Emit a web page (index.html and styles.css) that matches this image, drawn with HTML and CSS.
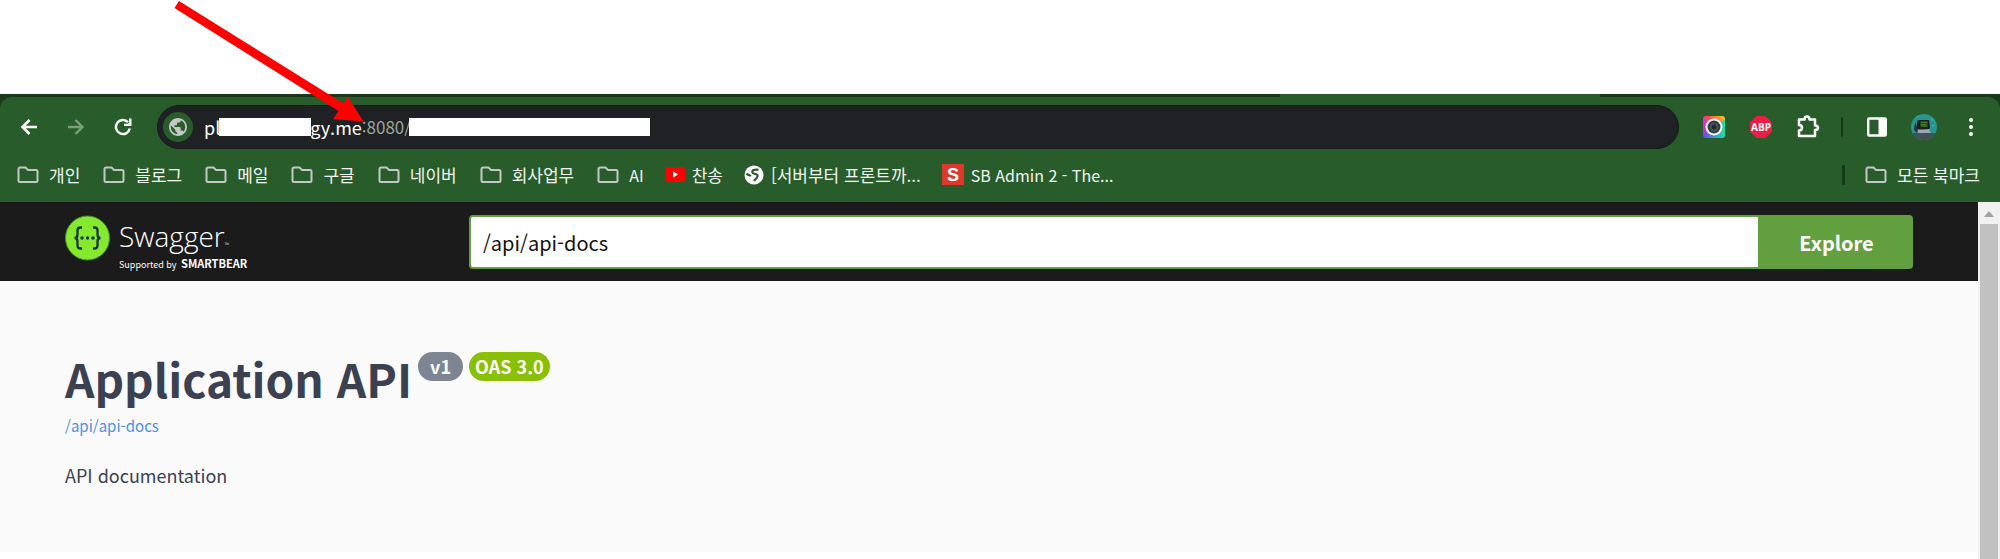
FILE: index.html
```html
<!DOCTYPE html>
<html lang="ko">
<head>
<meta charset="utf-8">
<title>Swagger UI</title>
<link rel="stylesheet" href="styles.css">
</head>
<body>
<svg width="0" height="0" class="defs" aria-hidden="true">
  <defs>
    <symbol id="folder" viewBox="0 0 22 18"><path d="M3 1.500h5.500l2.500 2.500h8a1.500 1.500 0 0 1 1.500 1.500v9a1.500 1.500 0 0 1-1.500 1.500H3a1.500 1.500 0 0 1-1.500-1.500v-11.500a1.500 1.500 0 0 1 1.500-1.500z" fill="none" stroke="#c4c7c5" stroke-width="2"/></symbol>
    <symbol id="globe" viewBox="2 2 20 20"><path d="M12 2C6.480 2 2 6.480 2 12s4.480 10 10 10 10-4.480 10-10S17.520 2 12 2zm-1 17.930c-3.950-.49-7-3.850-7-7.930 0-.62.080-1.210.210-1.790L9 15v1c0 1.100.9 2 2 2v1.930zm6.900-2.540c-.26-.81-1-1.390-1.900-1.390h-1v-3c0-.55-.45-1-1-1H8v-2h2c.55 0 1-.45 1-1V7h2c1.100 0 2-.9 2-2v-.41c2.930 1.190 5 4.060 5 7.410 0 2.080-.8 3.970-2.100 5.390z" fill="currentColor"/></symbol>
  </defs>
</svg>
<div class="screen">
  <svg class="arrow" width="200" height="130" viewBox="170 0 200 130" aria-hidden="true"><path d="M179 1L343.500 103.500 347.600 96.500 363.500 121.500 333 119 338.500 111 174.500 8z" fill="#f00"/></svg>
  <div class="tabstrip"><div class="active-tab"></div></div>
  <header class="browser">
    <nav class="toolbar">
      <button class="tool" aria-label="뒤로"><svg width="18" height="18" viewBox="0 0 18 18"><path d="M17 9H3M9.500 2L2.500 9l7 7" fill="none" stroke="#fff" stroke-width="2.600"/></svg></button>
      <button class="tool" aria-label="앞으로"><svg width="18" height="18" viewBox="0 0 18 18"><path d="M1 9h14M8.500 2l7 7-7 7" fill="none" stroke="#7b9f7d" stroke-width="2.400"/></svg></button>
      <button class="tool" aria-label="새로고침"><svg width="18" height="18" viewBox="0 0 18 18"><path d="M15.800 10.500A7 7 0 1 1 14 4.200" fill="none" stroke="#fff" stroke-width="2.500"/><path d="M17.500 .5v7.500h-7.500V5.800h4l1-1V.5z" fill="#fff"/></svg></button>
      <div class="address">
        <span class="site"><svg width="18" height="18"><use href="#globe"/></svg></span>
        <span class="host">pl</span><span class="mask mask-host"></span><span class="host">gy.me</span><span class="port">:8080/</span><span class="mask mask-path"></span>
      </div>
      <button class="tool" aria-label="카메라"><svg width="22" height="22" viewBox="0 0 22 22"><defs><linearGradient id="rainbow" x1="0" y1="1" x2="1" y2="0"><stop offset="0" stop-color="#6a4df0"/><stop offset=".35" stop-color="#d52ee0"/><stop offset=".6" stop-color="#ff4b4b"/><stop offset="1" stop-color="#ffd01f"/></linearGradient><linearGradient id="cool" x1="0" y1="0" x2="1" y2="0"><stop offset="0" stop-color="#505cf0"/><stop offset="1" stop-color="#20e0a0"/></linearGradient></defs><rect width="22" height="22" rx="3" fill="url(#rainbow)"/><path d="M1 21L11 11 21 4h1v15a3 3 0 0 1-3 3H3z" fill="url(#cool)"/><circle cx="11" cy="11" r="8.500" fill="#fff"/><circle cx="11" cy="11" r="6.500" fill="#303940"/><circle cx="11" cy="11" r="4.500" fill="#46545f"/><circle cx="11" cy="11" r="2.500" fill="#222b31"/></svg></button>
      <button class="tool" aria-label="Adblock Plus"><svg width="22" height="22" viewBox="0 0 22 22"><path d="M6.500 0h9L22 6.500v9L15.500 22h-9L0 15.500v-9z" fill="#ed1e45"/><text x="11" y="15" text-anchor="middle" class="abp">ABP</text></svg></button>
      <button class="tool" aria-label="확장 프로그램"><svg width="24" height="24" viewBox="0 0 24 24"><path d="M3 4.500h5.500C8.500 .5 13.500 .5 13.500 4.500H19v6c4 0 4 4.500 0 4.500v6H3v-5.500c4 0 4-5.500 0-5.500z" fill="none" stroke="#fff" stroke-width="2.500" stroke-linejoin="round"/></svg></button>
      <span class="divider"></span>
      <button class="tool" aria-label="측면 패널"><svg width="20" height="20" viewBox="0 0 20 20"><rect x="1.200" y="1.500" width="17.600" height="17" rx="1" fill="none" stroke="#fff" stroke-width="2.400"/><path d="M11.500 1h7.500v18h-7.500z" fill="#fff"/></svg></button>
      <button class="tool" aria-label="프로필"><svg width="26" height="26" viewBox="0 0 26 26"><defs><clipPath id="round"><circle cx="13" cy="13" r="13"/></clipPath></defs><g clip-path="url(#round)"><path d="M0 0h26v26H0z" fill="#24988e"/><path d="M0 19h26v7H0z" fill="#43505a"/><path d="M6 7l2-1h10l1 8-2 2-11-1z" fill="#171c20"/><path d="M9 7h8v6H9z" fill="#244916"/><path d="M10 8.500h6M10 10.500h5M10 12h6" stroke="#488421"/><path d="M7 16l11-1 2 4-13 0z" fill="#9aa7b2"/><path d="M4 8l-1 8 3 3 1-4z" fill="#293239"/><path d="M20 4l2 3M21 12l3-1M5 3l3-1" stroke="#42b8a9"/></g></svg></button>
      <button class="tool" aria-label="메뉴"><svg width="4" height="20" viewBox="0 0 4 20"><g fill="#fff"><circle cx="2" cy="3" r="2"/><circle cx="2" cy="10" r="2"/><circle cx="2" cy="17" r="2"/></g></svg></button>
    </nav>
    <nav class="bookmarks">
      <a href="#" class="bookmark"><svg width="22" height="18"><use href="#folder"/></svg>개인</a>
      <a href="#" class="bookmark"><svg width="22" height="18"><use href="#folder"/></svg>블로그</a>
      <a href="#" class="bookmark"><svg width="22" height="18"><use href="#folder"/></svg>메일</a>
      <a href="#" class="bookmark"><svg width="22" height="18"><use href="#folder"/></svg>구글</a>
      <a href="#" class="bookmark"><svg width="22" height="18"><use href="#folder"/></svg>네이버</a>
      <a href="#" class="bookmark"><svg width="22" height="18"><use href="#folder"/></svg>회사업무</a>
      <a href="#" class="bookmark latin"><svg width="22" height="18"><use href="#folder"/></svg>AI</a>
      <a href="#" class="bookmark site-mark"><svg width="20" height="15" viewBox="0 0 20 15"><rect width="20" height="15" rx="3" fill="#f00"/><path d="M8 4.300v6.400l5-3.200z" fill="#fff"/></svg>찬송</a>
      <a href="#" class="bookmark site-mark"><svg width="20" height="20" viewBox="0 0 20 20"><circle cx="10" cy="10" r="9.500" fill="#fff"/><path d="M14.500 4.500c-2 .5-5-.5-6 1.500-.8 2 .5 2.500 2.500 2.800 3 .5 3 2 2 3.700-1 1.500-2 2-3 3.500M2.500 8.500c1.500 2 3 1.500 4.500 2.500" fill="none" stroke="#285d2b" stroke-width="2.200"/></svg>[서버부터 프론트까...</a>
      <a href="#" class="bookmark site-mark latin"><svg width="22" height="21" viewBox="0 0 22 21"><path d="M0 0h22v21H0z" fill="#dd382d"/><text x="11" y="17" text-anchor="middle" class="s-mark">S</text></svg>SB Admin 2 - The...</a>
      <span class="divider divider-end"></span>
      <a href="#" class="bookmark"><svg width="22" height="18"><use href="#folder"/></svg>모든 북마크</a>
    </nav>
  </header>
  <div class="viewport">
    <main class="page">
      <div class="topbar">
        <a href="#" class="logo">
          <svg width="46" height="46" viewBox="0 0 46 46"><circle cx="22.500" cy="23" r="22" fill="#85ea2d" stroke="#4c8b27"/><g fill="none" stroke="#173647" stroke-width="2.300"><path d="M17 12.500h-1.500q-3 0-3 3v4q0 3.500-3 3.500 3 0 3 3.500v4q0 3 3 3H17M28 12.500h1.500q3 0 3 3v4q0 3.500 3 3.500-3 0-3 3.500v4q0 3-3 3H28"/></g><g fill="#173647"><circle cx="17" cy="23" r="1.700"/><circle cx="22.500" cy="23" r="1.700"/><circle cx="28" cy="23" r="1.700"/></g></svg>
          <span class="wordmark"><span class="name">Swagger<small>™</small></span><span class="support">Supported by <b>SMARTBEAR</b></span></span>
        </a>
        <form class="explore">
          <input class="url" type="text" value="/api/api-docs" aria-label="API URL">
          <button class="go" type="button">Explore</button>
        </form>
      </div>
      <section class="info">
        <h1 class="title">Application API<span class="badge">v1</span><span class="badge oas">OAS 3.0</span></h1>
        <a href="#" class="docs">/api/api-docs</a>
        <p class="about">API documentation</p>
      </section>
    </main>
    <div class="scrollbar"><svg width="10" height="6" viewBox="0 0 10 6"><path d="M0 6l5-6 5 6z" fill="#a3a3a3"/></svg><div class="thumb"></div></div>
  </div>
</div>
</body>
</html>
```
FILE: styles.css
```css
* { box-sizing: border-box; }
body { margin: 0; background: #fff; font-family: "Noto Sans CJK KR", "Noto Sans", sans-serif; }
svg { display: block; flex: none; }
a { text-decoration: none; }
button, input { font: inherit; border: 0; }
.defs { position: absolute; }
.screen { position: relative; display: flex; flex-direction: column; min-height: 100vh; padding-top: 94px; }
.arrow { position: absolute; left: 170px; top: 0; z-index: 2; }

.tabstrip { display: flex; justify-content: flex-end; height: 3px; padding-right: 20%; background: #1a381c; }
.active-tab { width: 20%; background: #285d2b; }
.browser { background: linear-gradient(#1a381c, #1a381c) top / 100% 12px no-repeat; }
.toolbar { display: flex; align-items: center; padding: 8px 6px 0 5px; background: #285d2b; border-radius: 12px 12px 0 0; }
.tool { display: flex; align-items: center; justify-content: center; width: 47px; height: 44px; padding: 0; background: none; }
.address { display: flex; flex: 1; align-items: center; height: 44px; margin: 0 11px; padding-left: 5px; border: 1px solid #17191b; border-radius: 22px; background: #202124; font-size: 18px; line-height: 24px; }
.site { display: flex; align-items: center; justify-content: center; width: 30px; height: 30px; margin-right: 11px; border-radius: 50%; background: #285d2b; color: #c4c7c5; }
.host { color: #fff; }
.port { color: #9aa69b; font-size: 17px; }
.mask { z-index: 1; height: 18px; background: #fff; }
.mask-host { width: 92px; margin: 0 -1px; }
.mask-path { width: 241px; margin-left: -2px; }
.divider { width: 2px; height: 20px; margin: 0 10px; border-radius: 1px; background: #183a1b; }
.abp { font: bold 10px "Open Sans", sans-serif; fill: #fff; }
.s-mark { font: bold 18px "Liberation Sans", sans-serif; fill: #fff; }

.bookmarks { display: flex; align-items: center; gap: 23px; height: 53px; padding: 0 20px 2px 17px; background: #285d2b; }
.bookmark { display: flex; align-items: center; gap: 10px; color: #f1f5f1; font-size: 17px; line-height: 24px; white-space: nowrap; }
.site-mark { gap: 7px; margin-left: -2px; }
.latin { font-size: 16px; }
.divider-end { width: 3px; margin: 0 -3px 0 auto; }

.viewport { display: flex; flex: 1; }
.page { flex: 1; }
.topbar { display: flex; align-items: center; height: 79px; padding: 0 65px; background: #1b1b1b; }
.logo { display: flex; width: 404px; height: 54px; color: #fff; font-family: "Open Sans", sans-serif; }
.wordmark { display: flex; flex-direction: column; padding: 7px 0 0 8px; }
.name { font-size: 28px; line-height: 28px; font-weight: 300; }
.name small { font-size: 6px; }
.support { font-family: "Noto Sans CJK KR", sans-serif; font-size: 9px; line-height: 8px; }
.support b { font-size: 11px; font-weight: 700; margin-left: 2px; }
.explore { display: flex; flex: 1; height: 54px; margin: 0; }
.url { flex: 1; min-width: 0; padding: 2px 12px 0; border: 2px solid #62a03f; border-radius: 4px 0 0 4px; background: #fff; color: #111; font-size: 20px; }
.go { width: 153px; padding: 2px 0 0; border-radius: 0 4px 4px 0; background: #62a03f; color: #fff; font-size: 20px; font-weight: 700; }

.info { height: 271px; padding: 67px 65px 0; background: #fafafa; }
.title { display: flex; align-items: flex-start; margin: 0; color: #3b4151; font-size: 46px; line-height: 60px; font-weight: 700; }
.badge { margin: 4px 0 0 6px; padding: 0 12px; border-radius: 15px; background: #7d8492; color: #fff; font-size: 18px; line-height: 29px; }
.oas { padding: 0 6px; background: #89bf04; }
.docs { display: block; padding-top: 4px; color: #4990e2; font-size: 15px; line-height: 28px; }
.about { margin: 21px 0 0; color: #3b4151; font-size: 18px; line-height: 28px; }
.scrollbar { display: flex; flex-direction: column; align-items: center; width: 22px; padding-top: 9px; background: #f1f1f1; }
.thumb { flex: 1; width: 18px; margin-top: 7px; background: #c1c1c1; }
```
